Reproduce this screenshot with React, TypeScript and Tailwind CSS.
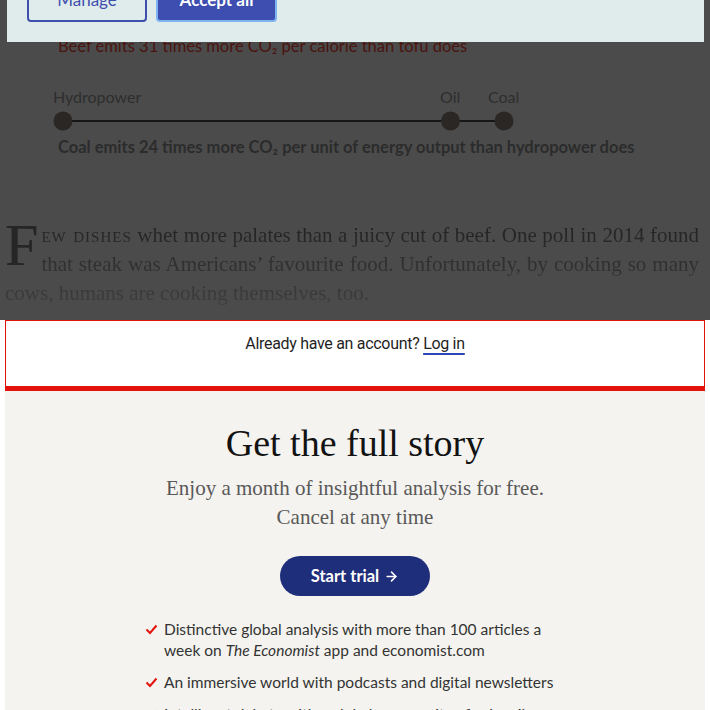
import React from "react";
import { ArrowRight } from "lucide-react";

const sans = "font-['Lato','Noto_Sans',sans-serif]";
const serif = "font-['Liberation_Serif','DejaVu_Serif',serif]";

const benefits: React.ReactNode[] = [
  <>
    Distinctive global analysis with more than 100 articles a week on <i>The Economist</i> app and
    economist.com
  </>,
  <>An immersive world with podcasts and digital newsletters</>,
  <>Intelligent debate with a global community of subscribers</>,
];

const Check = () => (
  <svg width="13" height="11" viewBox="0 0 13 11" className="mt-[5px] shrink-0">
    <polyline points="1.5,5.5 5,9 11.5,1.5" fill="none" stroke="#e3120b" strokeWidth="2" />
  </svg>
);

const CookieBanner = () => (
  <div className="absolute top-0 left-[7px] w-[697px] h-[42px] bg-[#e0ebeb] overflow-hidden">
    <div className={`flex gap-[9px] pl-[20px] -mt-[22px] ${sans}`}>
      <button className="w-[120px] h-[44px] rounded-[4px] border-2 border-[#3e4fae] text-[#3e4fae] text-[17px]">
        Manage
      </button>
      <button className="w-[121px] h-[44px] rounded-[4px] border-2 border-[#7db4ef] bg-[#3d4eb0] text-white font-bold text-[17px]">
        Accept all
      </button>
    </div>
  </div>
);

const Chart = () => (
  <div className={`relative ml-[53px] mt-[31px] w-[480px] h-[50px] text-[#2e2e2e] text-[16px] leading-[20px] ${sans}`}>
    <span className="absolute left-0 top-0">Hydropower</span>
    <span className="absolute left-[387px] top-0">Oil</span>
    <span className="absolute left-[435px] top-0">Coal</span>
    <svg width="480" height="20" className="absolute left-0 top-[24px]">
      <line x1="10" y1="10" x2="451" y2="10" stroke="#161616" strokeWidth="2" />
      <circle cx="10" cy="10" r="9.5" fill="#2a2724" />
      <circle cx="397.5" cy="10" r="9.5" fill="#2a2724" />
      <circle cx="451" cy="10" r="9.5" fill="#2a2724" />
    </svg>
  </div>
);

export default function App() {
  return (
    <div className="relative w-[710px] h-[710px] overflow-hidden bg-white">
      <div className="relative h-[320px] bg-[#4b4b4b] overflow-hidden">
        <p className={`pl-[58px] pt-[36px] text-[16.5px] leading-[20px] text-[#4a140f] ${sans}`}>
          Beef emits 31 times more CO₂ per calorie than tofu does
        </p>
        <Chart />
        <p className={`pl-[58px] text-[16.5px] leading-[20px] font-bold text-[#2b2b2b] ${sans}`}>
          Coal emits 24 times more CO₂ per unit of energy output than hydropower does
        </p>

        <p
          className={`mt-[64px] ml-[5px] w-[694px] text-justify text-[21px] leading-[29px] bg-linear-to-b from-[#212121] to-[#3f3f3f] bg-clip-text text-transparent ${serif}`}
        >
          <span className="float-left text-[60px] leading-[48px] mr-[3px] text-[#262626]">F</span>
          <span className="[font-variant:small-caps] tracking-[1px]">ew dishes</span> whet more palates than a
          juicy cut of beef. One poll in 2014 found that steak was Americans’ favourite food. Unfortunately, by
          cooking so many cows, humans are cooking themselves, too.
        </p>

        <CookieBanner />
      </div>

      <div className="mx-[5px] h-[71px] bg-white border border-[#e3120b] border-b-[5px]">
        <p className="pt-[11px] text-center text-[16px] tracking-[-0.3px] leading-[24px] text-[#1f1f1f] font-['Roboto',sans-serif]">
          Already have an account?{" "}
          <a className="underline decoration-[#2e45b8] decoration-2 underline-offset-4">Log in</a>
        </p>
      </div>

      <div className="mx-[5px] h-[400px] bg-[#f4f3ef] pt-[32px] flex flex-col items-center">
        <h2 className={`text-[38px] leading-[40px] text-[#121212] ${serif}`}>Get the full story</h2>
        <p className={`mt-[11px] text-center text-[21px] leading-[29px] text-[#595959] ${serif}`}>
          Enjoy a month of insightful analysis for free.
          <br />
          Cancel at any time
        </p>
        <button
          className={`mt-[24px] w-[150px] h-[40px] rounded-full bg-[#1f2e7a] text-white font-bold text-[16.5px] flex items-center justify-center gap-[5px] ${sans}`}
        >
          Start trial
          <ArrowRight size={15} strokeWidth={2.5} />
        </button>
        <ul
          className={`self-start ml-[140px] mt-[23px] w-[430px] flex flex-col gap-[11px] text-[15.5px] leading-[21px] text-[#333] ${sans}`}
        >
          {benefits.map((b, i) => (
            <li key={i} className="flex gap-[6px]">
              <Check />
              <span className="w-[410px]">{b}</span>
            </li>
          ))}
        </ul>
      </div>
    </div>
  );
}
